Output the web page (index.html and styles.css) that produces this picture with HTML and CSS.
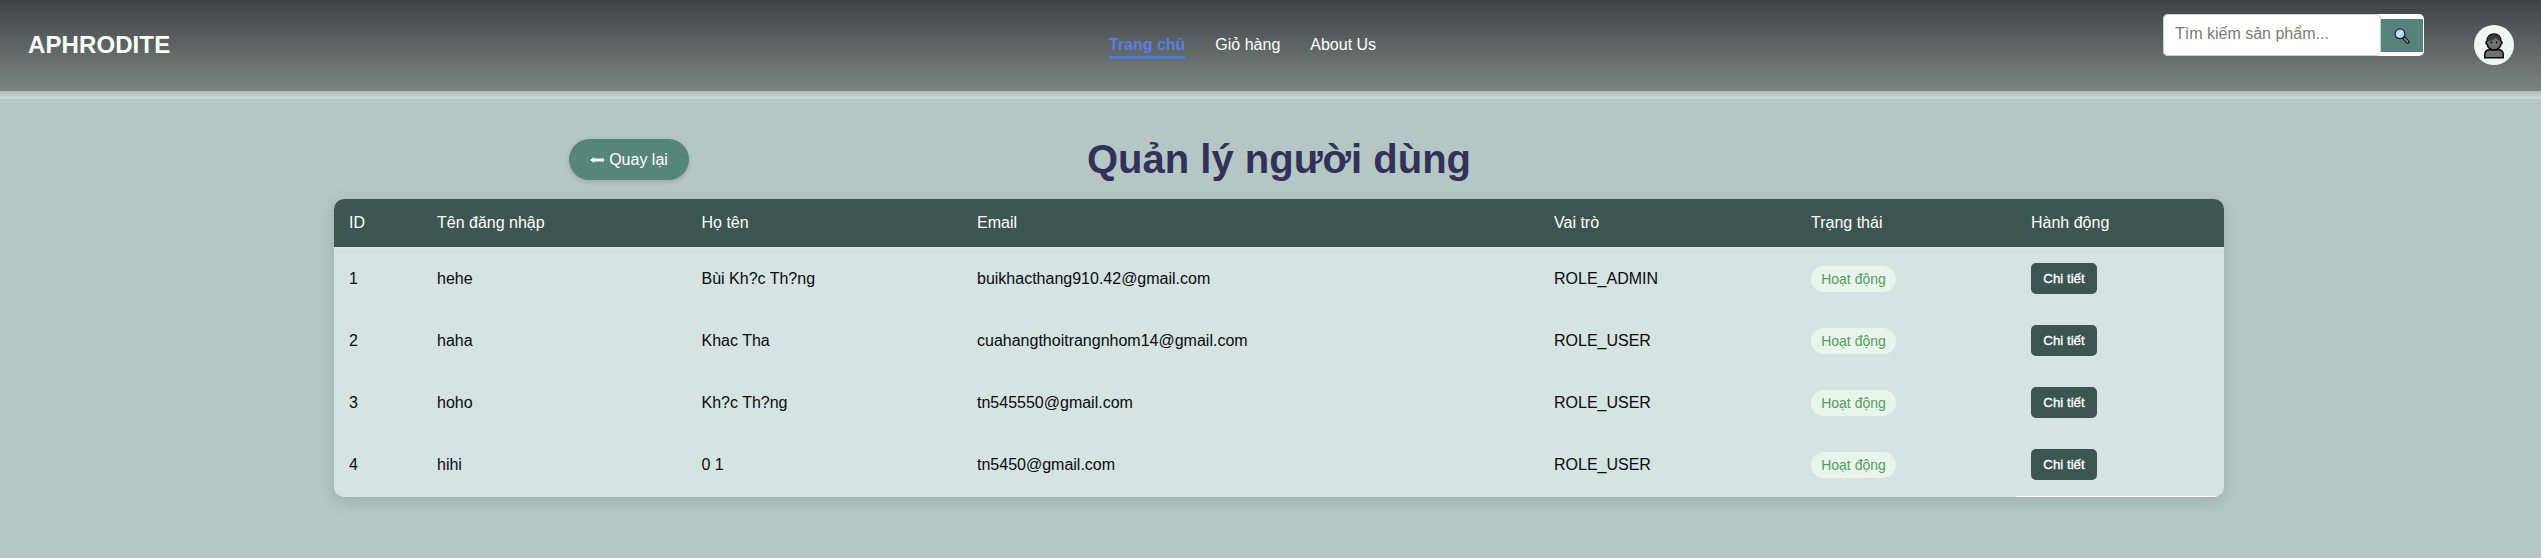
FILE: index.html
```html
<!DOCTYPE html>
<html lang="vi">
<head>
<meta charset="utf-8">
<title>Quản lý người dùng</title>
<link rel="stylesheet" href="styles.css">
</head>
<body>
<header class="header">
  <div class="logo">APHRODITE</div>
  <nav class="nav">
    <a class="nav-link active">Trang chủ</a>
    <a class="nav-link">Giỏ hàng</a>
    <a class="nav-link">About Us</a>
  </nav>
  <div class="tools">
    <div class="search">
      <input class="search-input" type="text" placeholder="Tìm kiếm sản phẩm...">
      <button class="search-btn" aria-label="search">
        <svg width="16" height="16" viewBox="0 0 16 16"><path d="M9.8 9.8 13.6 13.8" stroke="#111" stroke-width="3.800" stroke-linecap="round"/><path d="M10.6 10.600 13.500 13.700" stroke="#85898c" stroke-width="1.800" stroke-linecap="round"/><circle cx="6" cy="5.800" r="4.900" fill="#b5d5f4" stroke="#222b33" stroke-width="1.200"/><path d="M3.200 8.300 8.400 3" stroke="#d6e9fb" stroke-width="1.800"/></svg>
      </button>
    </div>
    <div class="avatar">
      <svg width="22" height="26" viewBox="0 0 22 26"><path d="M1.800 24.800v-3.200c0-3 2-4.800 5-4.800h8.400c3 0 5 1.800 5 4.800v3.200z" fill="#717171" stroke="#080808" stroke-width="1.500"/><path d="M4.100 8.100C4.200 3.700 7 1 11 1s6.800 2.700 6.900 7.100c1.500.2 1.500 2.900 0 3.100-.8 3.300-3.500 5.700-6.900 5.700s-6.100-2.400-6.900-5.700c-1.500-.2-1.500-2.900 0-3.100z" fill="#717171" stroke="#080808" stroke-width="1.500"/><path d="M4.600 8C4.700 4 7.200 1.600 11 1.600S17.300 4 17.400 8C15.500 7.600 14 6.500 13 5 11 7 8 8 4.600 8z" fill="#3b3b3b"/><circle cx="8.300" cy="9.400" r=".8"/><circle cx="13.700" cy="9.400" r=".8"/></svg>
    </div>
  </div>
</header>
<div class="strip"></div>
<main class="main">
  <div class="title-row">
    <a class="back"><svg width="14" height="8" viewBox="0 0 14 8"><path d="M0 4 4.200 1v1.400H14v3.200H4.200V7z" fill="#fff"/></svg>Quay lại</a>
    <h1 class="title">Quản lý người dùng</h1>
  </div>
  <div class="table">
    <div class="row head"><span>ID</span><span>Tên đăng nhập</span><span>Họ tên</span><span>Email</span><span>Vai trò</span><span>Trạng thái</span><span>Hành động</span></div>
    <div class="row"><span>1</span><span>hehe</span><span>Bùi Kh?c Th?ng</span><span>buikhacthang910.42@gmail.com</span><span>ROLE_ADMIN</span><span><b class="badge">Hoạt động</b></span><span><button class="detail">Chi tiết</button></span></div>
    <div class="row"><span>2</span><span>haha</span><span>Khac Tha</span><span>cuahangthoitrangnhom14@gmail.com</span><span>ROLE_USER</span><span><b class="badge">Hoạt động</b></span><span><button class="detail">Chi tiết</button></span></div>
    <div class="row"><span>3</span><span>hoho</span><span>Kh?c Th?ng</span><span>tn545550@gmail.com</span><span>ROLE_USER</span><span><b class="badge">Hoạt động</b></span><span><button class="detail">Chi tiết</button></span></div>
    <div class="row"><span>4</span><span>hihi</span><span>0 1</span><span>tn5450@gmail.com</span><span>ROLE_USER</span><span><b class="badge">Hoạt động</b></span><span class="action"><button class="detail">Chi tiết</button></span></div>
  </div>
</main>
</body>
</html>
```
FILE: styles.css
```css
* { box-sizing: border-box; }
body {
  margin: 0;
  height: 558px;
  overflow: hidden;
  background: #b4c7c5;
  color: #0a0a12;
  font: 16px/18px "Liberation Sans", Arial, sans-serif;
}
.header {
  height: 91px;
  padding: 0 27px 0 28px;
  display: grid;
  grid-template-columns: 1fr auto 1fr;
  align-items: center;
  background: linear-gradient(#3f4244, #7b8782);
}
.logo {
  padding-bottom: 2px;
  color: #fff;
  font-size: 24px;
  line-height: 28px;
  font-weight: bold;
  letter-spacing: .1px;
}
.nav { display: flex; gap: 30px; margin-right: 57px; padding-top: 4px; }
.nav-link { color: #fff; height: 23px; border-bottom: 3px solid transparent; }
.nav-link.active { color: #5b7be4; font-weight: bold; border-color: #4f79e6; }
.tools { display: flex; justify-content: flex-end; align-items: flex-start; gap: 50px; height: 63px; }
.search {
  width: 261px;
  height: 42px;
  padding-right: 1px;
  display: flex;
  align-items: center;
  background: #fff;
  border-radius: 5px;
}
.search-input {
  width: 218px;
  height: 42px;
  padding: 0 11px 2px;
  border: 1px solid #ccc;
  border-radius: 5px;
  background: #fff;
  font: 16px "Liberation Sans", Arial, sans-serif;
}
.search-input::placeholder { color: #7b7b7b; }
.search-btn {
  width: 42px;
  height: 33px;
  padding: 2px 0 0;
  display: grid;
  place-items: center;
  border: 0;
  background: #56827a;
}
.avatar {
  width: 40px;
  height: 40px;
  margin-top: 11px;
  padding-top: 1px;
  display: grid;
  place-items: center;
  border-radius: 50%;
  background: #f3f4f4;
}
.strip {
  height: 8px;
  background: linear-gradient(#adb9b4, #c5d5d2 75%, #c8dcd6);
}
.main { width: 1890px; margin: 0 0 0 334px; padding-top: 37px; }
.title-row {
  height: 63px;
  display: grid;
  grid-template-columns: 1fr auto 1fr;
  align-items: start;
}
.back {
  width: 120px;
  height: 41px;
  margin: 3px 0 0 235px;
  padding-top: 1px;
  display: flex;
  align-items: center;
  justify-content: center;
  gap: 5px;
  border-radius: 21px;
  background: #58857a;
  color: #fff;
  box-shadow: 0 2px 5px rgba(0, 0, 0, .15);
}
.title { margin: 0; font-size: 40px; line-height: 46px; color: #33305a; }
.table {
  border-radius: 10px;
  overflow: hidden;
  background: #d5e3e1;
  box-shadow: 0 4px 16px rgba(0, 0, 0, .13);
}
.row {
  height: 62px;
  display: grid;
  grid-template-columns: 88px 264.5px 275.5px 577px 257px 220px 208px;
}
.row > span { display: flex; align-items: center; padding: 0 15px 2px; }
.row.head { height: 50px; background: #3b5651; color: #fff; border-bottom: 2px solid #d7e5e3; }
.row.head > span { padding-bottom: 0; }
.row > .action { padding-bottom: 1px; border-bottom: 1px solid #fff; }
.badge {
  width: 85px;
  height: 26px;
  border-radius: 13px;
  background: #e8f5ec;
  color: #579a5e;
  font-size: 14px;
  font-weight: normal;
  line-height: 26px;
  text-align: center;
}
.detail {
  width: 66px;
  height: 31px;
  margin: 0 0 2px;
  padding: 0;
  border: 0;
  border-radius: 5px;
  background: #3b5651;
  color: #fff;
  font: 13.33px "Liberation Sans", Arial, sans-serif;
  -webkit-text-stroke: .3px #fff;
}
```
